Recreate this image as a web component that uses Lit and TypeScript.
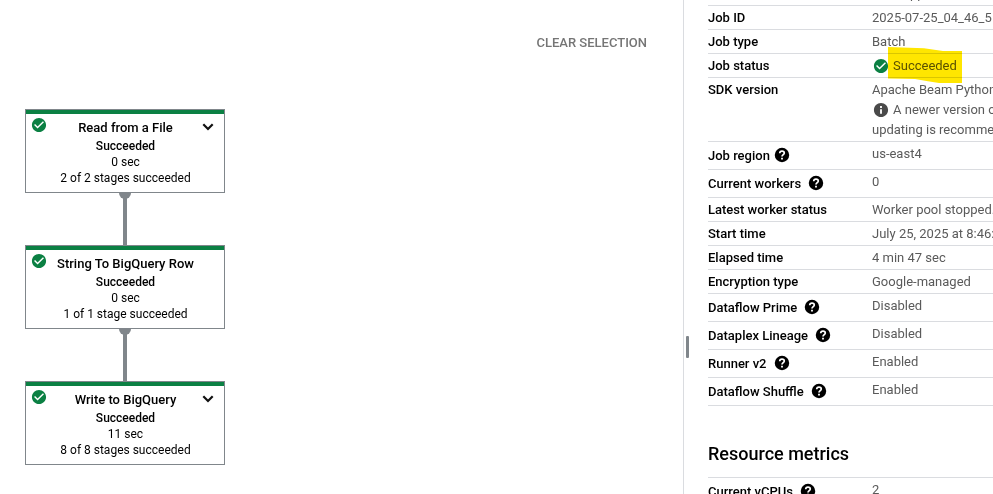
import { LitElement, html, css, svg, nothing } from "lit";
import { customElement, property } from "lit/decorators.js";

const CHECK = "M12 2C6.5 2 2 6.5 2 12s4.5 10 10 10 10-4.5 10-10S17.5 2 12 2zm-2 15l-5-5 1.4-1.4 3.6 3.6 7.6-7.6L19 8l-9 9z";
const INFO = "M12 2C6.48 2 2 6.48 2 12s4.48 10 10 10 10-4.48 10-10S17.52 2 12 2zm1.3 15.4h-2.6v-6.6h2.6v6.6zm0-8.4h-2.6V6.4h2.6V9z";
const BOX = "0.7 0.7 22.6 22.6";

type IconName = "check" | "help" | "info" | "chevron";

@customElement("ui-icon")
export class UiIcon extends LitElement {
  @property() name: IconName = "check";
  static styles = css`
    :host { display: inline-block; width: 16px; height: 16px; flex: none; }
    svg { display: block; width: 100%; height: 100%; }
    .check { fill: #0b8043; }
    .disc { fill: #000; }
    .mark { fill: none; stroke: #fff; }
    .info { fill: #4a4a4a; }
    .chevron { fill: none; stroke: #111; stroke-width: 2.2; }
  `;
  render() {
    if (this.name === "chevron")
      return html`<svg class="chevron" viewBox="0 0 12 8"><path d="M1.3 1.3 6 6l4.7-4.7" /></svg>`;
    if (this.name === "help")
      return html`<svg viewBox=${BOX}>${svg`<circle class="disc" cx="12" cy="12" r="10.2"/><path class="mark" stroke-width="2.4" d="M8.8 9.4C8.8 7.5 10.2 6.4 12 6.4s3.2 1.1 3.2 2.8c0 2.2-3.2 2.4-3.2 5"/><path class="mark" stroke-width="2.6" d="M12 15.8v2.5"/>`}</svg>`;
    return html`<svg class=${this.name} viewBox=${BOX}><path d=${this.name === "info" ? INFO : CHECK} /></svg>`;
  }
}

@customElement("step-node")
export class StepNode extends LitElement {
  @property() label = "";
  @property() time = "";
  @property() stages = "";
  @property({ type: Boolean }) expandable = false;
  static styles = css`
    :host { display: block; position: relative; box-sizing: border-box; width: 200px; height: 84px;
      border: 1px solid #80868b; background: #fff; text-align: center; color: #000; }
    .bar { height: 4px; background: #0b8043; }
    .check { position: absolute; left: 5px; top: 7px; }
    .chevron { position: absolute; left: 176px; top: 13px; width: 12px; height: 8px; }
    .title, .line { padding-left: 1px; }
    .title { font: 500 13px/18px Roboto, sans-serif; padding-top: 5px; }
    .line { font: 400 12px/16px Roboto, sans-serif; }
    .status { font-weight: 500; padding-top: 1px; }
  `;
  render() {
    return html`<div class="bar"></div>
      <ui-icon class="check" name="check"></ui-icon>
      ${this.expandable ? html`<ui-icon class="chevron" name="chevron"></ui-icon>` : nothing}
      <div class="title">${this.label}</div>
      <div class="line status">Succeeded</div>
      <div class="line">${this.time}</div>
      <div class="line">${this.stages}</div>`;
  }
}

interface Row { label: string; value: unknown; help?: boolean; snug?: boolean }

const ROWS: Row[] = [
  { label: "Job ID", value: "2025-07-25_04_46_5" },
  { label: "Job type", value: "Batch" },
  { label: "Job status", value: html`<span class="inline"><ui-icon name="check"></ui-icon><span class="marked">Succeeded<svg class="marker" viewBox="0 0 74 36"><path d="M0 0 36 1.2 55 4H74V36H51L40 34.3 27 32 0 31.5Z"/></svg></span></span>` },
  { label: "SDK version", value: html`Apache Beam Python<br /><span class="inline"><ui-icon name="info"></ui-icon>A newer version of</span><br />updating is recommended` },
  { label: "Job region", value: "us-east4", help: true, snug: true },
  { label: "Current workers", value: "0", help: true },
  { label: "Latest worker status", value: "Worker pool stopped." },
  { label: "Start time", value: "July 25, 2025 at 8:46:57" },
  { label: "Elapsed time", value: "4 min 47 sec" },
  { label: "Encryption type", value: "Google-managed" },
  { label: "Dataflow Prime", value: "Disabled", help: true },
  { label: "Dataplex Lineage", value: "Disabled", help: true },
  { label: "Runner v2", value: "Enabled", help: true },
  { label: "Dataflow Shuffle", value: "Enabled", help: true },
];

@customElement("app-root")
export class AppRoot extends LitElement {
  static styles = css`
    :host { display: flex; width: 993px; height: 494px; overflow: hidden; background: #fff;
      font: 400 13px/20px Roboto, sans-serif; }
    .graph { flex: none; width: 683px; position: relative; }
    .clear { position: absolute; right: 36px; top: 33px; color: #757575; font-weight: 500; }
    .flow { display: flex; flex-direction: column; align-items: center; width: 200px; margin: 109px 0 0 25px; }
    .link { position: relative; width: 4px; height: 52px; background: #80868b; }
    .link::before { content: ""; position: absolute; left: -4px; top: 0; width: 12px; height: 6px;
      border-radius: 0 0 6px 6px; background: #80868b; }
    .panel { flex: 1; min-width: 0; display: flex; overflow: hidden; border-left: 1px solid #dadce0; }
    .grip { flex: none; width: 3px; height: 22px; margin: 336px 18px 0 2px; border-radius: 1px; background: #80868b; }
    .details { flex: 1; min-width: 0; margin-left: 1px; }
    .row { display: grid; grid-template-columns: 164px 1fr; box-sizing: border-box; padding: 2px 0 1px;
      border-bottom: 1px solid #dadce0; white-space: nowrap; color: #5a5a5a; }
    .row.tip { height: 28px; }
    .row.cut { height: 24px; margin-top: -18px; }
    .label { color: #000; font-weight: 500; display: flex; gap: 7px; align-items: flex-start; }
    .snug .label { gap: 4px; }
    .tip .label { padding-top: 2px; }
    .tip .label ui-icon { margin-top: 1px; }
    .inline { display: inline-flex; align-items: center; gap: 4px; height: 20px; vertical-align: top; }
    .inline ui-icon { margin-left: 1px; }
    .marked { position: relative; }
    .marker { position: absolute; left: -5px; top: -9px; width: 74px; height: 36px; fill: #ffe600; mix-blend-mode: multiply; }
    h2 { margin: 36px 0 0; height: 35px; font: 500 18px/24px Roboto, sans-serif; border-bottom: 1px solid #dadce0; color: #000; }
    .app { margin-left: 38px; }
  `;
  private row(r: Row) {
    return html`<div class="row ${r.help ? "tip" : ""} ${r.snug ? "snug" : ""}">
      <div class="label">${r.label}${r.help ? html`<ui-icon name="help"></ui-icon>` : nothing}</div>
      <div class="value">${r.value}</div>
    </div>`;
  }
  render() {
    return html`<div class="graph">
        <div class="clear">CLEAR SELECTION</div>
        <div class="flow">
          <step-node label="Read from a File" time="0 sec" stages="2 of 2 stages succeeded" expandable></step-node>
          <div class="link"></div>
          <step-node label="String To BigQuery Row" time="0 sec" stages="1 of 1 stage succeeded"></step-node>
          <div class="link"></div>
          <step-node label="Write to BigQuery" time="11 sec" stages="8 of 8 stages succeeded" expandable></step-node>
        </div>
      </div>
      <div class="panel">
        <div class="grip"></div>
        <div class="details">
          <div class="row cut"><div></div><div class="value"><span class="app">pp</span></div></div>
          ${ROWS.map((r) => this.row(r))}
          <h2>Resource metrics</h2>
          ${this.row({ label: "Current vCPUs", value: "2", help: true })}
        </div>
      </div>`;
  }
}
